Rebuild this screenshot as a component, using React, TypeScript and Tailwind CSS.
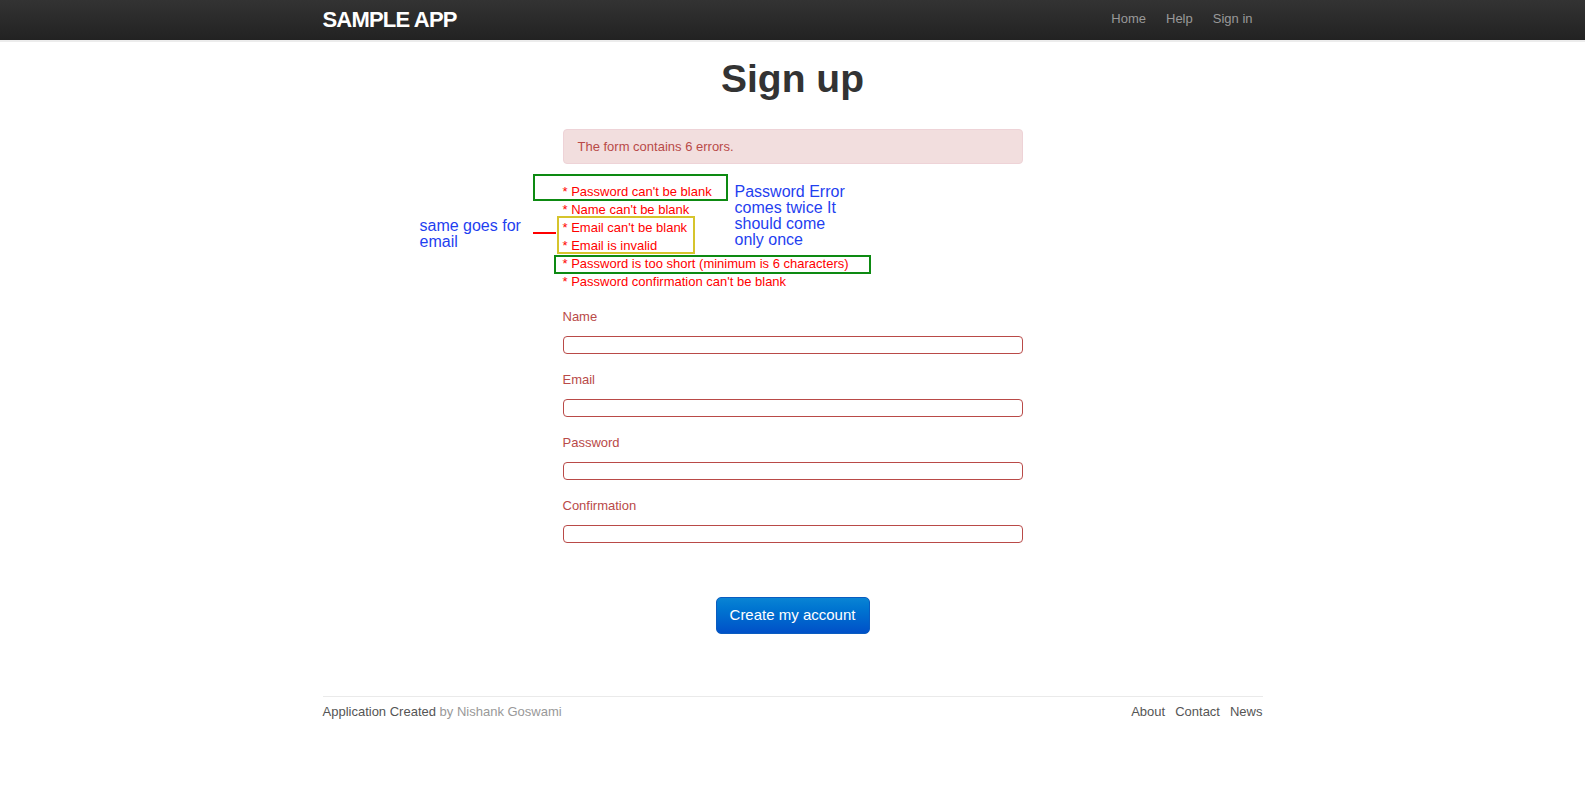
const errors = [
  "Password can't be blank",
  "Name can't be blank",
  "Email can't be blank",
  "Email is invalid",
  "Password is too short (minimum is 6 characters)",
  "Password confirmation can't be blank",
];

const fields = ["Name", "Email", "Password", "Confirmation"];

function Header() {
  return (
    <header className="h-[42px] border-b-2 border-[#ececec] bg-gradient-to-b from-[#333333] to-[#222222]">
      <div className="mx-auto flex h-[38px] w-[940px] items-center justify-between">
        <a className="text-[22px] font-bold tracking-[-0.8px] text-white">SAMPLE APP</a>
        <nav className="flex text-[13px] text-[#999999]">
          <a className="px-[10px]">Home</a>
          <a className="px-[10px]">Help</a>
          <a className="pl-[10px] pr-[10px]">Sign in</a>
        </nav>
      </div>
    </header>
  );
}

function Annotations() {
  return (
    <>
      <div className="absolute left-[-30px] top-[-9px] h-[27px] w-[195px] border-2 border-[#0d8a12]" />
      <div className="absolute left-[-9px] top-[72px] h-[19px] w-[317px] border-2 border-[#0d8a12]" />
      <div className="absolute left-[-6px] top-[33px] h-[38px] w-[138px] border-2 border-[#d6c42c]" />
      <div className="absolute left-[-30px] top-[49px] h-[2px] w-[23px] bg-[#ff0000]" />
      <p className="absolute left-[172px] top-[1px] w-[130px] text-[16px] leading-[16px] text-[#1f3ff0]">
        Password Error
        <br />
        comes twice It
        <br />
        should come
        <br />
        only once
      </p>
      <p className="absolute left-[-143px] top-[35px] w-[120px] text-[16px] leading-[16px] text-[#1f3ff0]">
        same goes for
        <br />
        email
      </p>
    </>
  );
}

export default function App() {
  return (
    <div className="min-h-[812px] bg-white font-['Liberation_Sans',Arial,sans-serif] text-[13px] text-[#333333]">
      <Header />
      <main className="mx-auto w-[940px]">
        <h1 className="mt-[17px] text-center text-[39px] font-bold leading-[40px] text-[#333333]">
          Sign up
        </h1>
        <div className="ml-[240px] w-[460px]">
          <div className="mt-[30px] flex h-[35px] items-center rounded-[4px] border border-[#eed3d7] bg-[#f2dede] pl-[14px] text-[13px] text-[#b94a48]">
            The form contains 6 errors.
          </div>
          <div className="relative mt-[19px]">
            <ul className="text-[13px] leading-[18px] text-[#ff0000]">
              {errors.map(e => (
                <li key={e}>* {e}</li>
              ))}
            </ul>
            <Annotations />
          </div>
          <form className="mt-[17px]">
            {fields.map((f, i) => (
              <div key={f} className={i > 0 ? "mt-[17px]" : ""}>
                <label className="block text-[13px] leading-[18px] text-[#b94a48]">{f}</label>
                <input
                  type={f === "Password" || f === "Confirmation" ? "password" : "text"}
                  className="mt-[10px] block h-[18px] w-full rounded-[4px] border border-[#b94a48] bg-white outline-none"
                />
              </div>
            ))}
            <div className="mt-[54px] flex justify-center">
              <button
                type="button"
                className="h-[37px] w-[154px] rounded-[5px] border border-[#0a5cc0] bg-gradient-to-b from-[#0a84d4] to-[#0150c8] text-[15px] text-white"
              >
                Create my account
              </button>
            </div>
          </form>
        </div>
        <footer className="mt-[62px] flex justify-between border-t border-[#eaeaea] pt-[6px] text-[13px] leading-[18px]">
          <div className="text-[#555555]">
            Application Created <span className="text-[#999999]">by Nishank Goswami</span>
          </div>
          <ul className="flex text-[#555555]">
            <li>About</li>
            <li className="ml-[10px]">Contact</li>
            <li className="ml-[10px]">News</li>
          </ul>
        </footer>
      </main>
    </div>
  );
}
